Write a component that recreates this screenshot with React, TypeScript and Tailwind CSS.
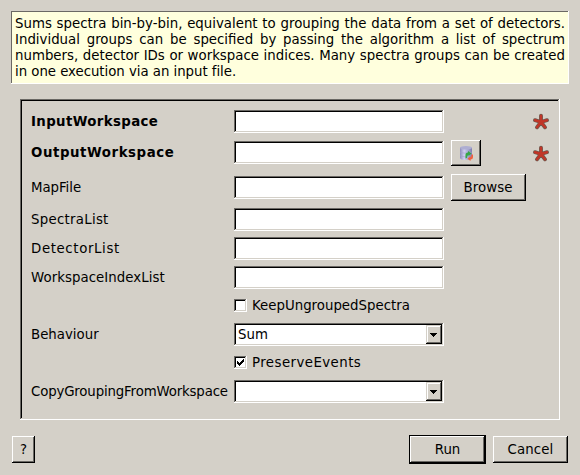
import type { ReactNode } from "react";

const sunken =
  "bg-white shadow-[inset_-1px_-1px_0_#fff,inset_1px_1px_0_#6a6864,inset_-2px_-2px_0_#d4d0c8,inset_2px_2px_0_#000]";
const raised =
  "flex items-center justify-center bg-[#d4d0c8] shadow-[inset_-1px_-1px_0_#000,inset_1px_1px_0_#fff,inset_-2px_-2px_0_#6a6864]";

function Row({ label, labelClass = "", className, children }: { label?: string; labelClass?: string; className: string; children: ReactNode }) {
  return (
    <div className={`flex items-center ${className}`}>
      <span className={`w-[203px] shrink-0 whitespace-nowrap ${labelClass}`}>{label}</span>
      {children}
    </div>
  );
}

function Field() {
  return <div className={`h-[23px] w-[210px] shrink-0 ${sunken}`} />;
}

function Combo({ value }: { value?: string }) {
  return (
    <div className={`flex h-[23px] w-[210px] shrink-0 justify-between p-0.5 ${sunken}`}>
      <span className="pl-0.5 leading-[19px]">{value}</span>
      <span className="flex h-[19px] w-4 items-center justify-center bg-[#d4d0c8] shadow-[inset_-1px_-1px_0_#000,inset_1px_1px_0_#d4d0c8,inset_-2px_-2px_0_#6a6864,inset_2px_2px_0_#fff]">
        <svg className="-ml-px" width="7" height="4" viewBox="0 0 7 4" shapeRendering="crispEdges">
          <path d="M0 0h7v1H6v1H5v1H4v1H3V3H2V2H1V1H0z" />
        </svg>
      </span>
    </div>
  );
}

function Check({ label, checked, labelClass = "" }: { label: string; checked?: boolean; labelClass?: string }) {
  return (
    <div className="flex items-center gap-[5px]">
      <span className={`flex size-[13px] items-center justify-center ${sunken}`}>
        {checked && (
          <svg width="7" height="7" viewBox="0 0 7 7" shapeRendering="crispEdges">
            <path d="M0 2h1v1h1v1h1V3h1V2h1V1h1V0h1v3H6v1H5v1H4v1H3v1H2V6H1V5H0z" />
          </svg>
        )}
      </span>
      <span className={`whitespace-nowrap ${labelClass}`}>{label}</span>
    </div>
  );
}

function Star({ className = "" }: { className?: string }) {
  return (
    <svg className={`mr-2.5 ml-auto ${className}`} width="17" height="17" viewBox="0 0 17 17">
      <g strokeLinecap="round" fill="none">
        <path d="M8 9V2.700M8 9L2 7.200M8 9L14 7.200M8 9L4 14.300M8 9L12 14.300" stroke="#6c5a50" strokeWidth="3.900" />
        <path d="M8 9V2.700M8 9L2 7.200M8 9L14 7.200M8 9L4 14.300M8 9L12 14.300" stroke="#c03628" strokeWidth="2.500" />
      </g>
    </svg>
  );
}

function DatabaseIcon() {
  return (
    <svg width="16" height="16" viewBox="0 0 16 16">
      <defs>
        <linearGradient id="cylinder">
          <stop stopColor="#8c8cba" />
          <stop offset=".35" stopColor="#d0d0f2" />
          <stop offset="1" stopColor="#7c7caf" />
        </linearGradient>
      </defs>
      <path d="M2 2.800v10C2 14.300 4.500 15 8 15s6-.8 6-2.200v-10z" fill="url(#cylinder)" />
      <ellipse cx="8" cy="2.800" rx="6" ry="1.800" fill="#aeaed2" />
      <path d="M2 7c2 1.500 10 1.500 12 0M2 10.500c2 1.500 7 1.500 9 1" fill="none" stroke="#a1a1ca" strokeWidth=".6" />
      <path d="M7.500 13.500V10q0-2.500 2.500-2.500V6L13.500 8.500 10.500 11V9.800Q9 10.500 9 13z" fill="#35a747" />
      <path d="M15 9.500v2.700q0 2.300-2.500 2.300V16L9.500 13.700l3-2.400v1.200q1-.5 1-3z" fill="#f25f3c" />
    </svg>
  );
}

const help = [
  "Sums spectra bin-by-bin, equivalent to grouping the data from a set of detectors.",
  "Individual groups can be specified by passing the algorithm a list of spectrum",
  "numbers, detector IDs or workspace indices. Many spectra groups can be created",
];

export default function App() {
  return (
    <main className="flex h-[475px] w-[580px] flex-col overflow-hidden bg-[#d4d0c8] pt-[11px] font-['DejaVu_Sans',sans-serif] text-[13.33px] leading-4 text-black">
      <section className="ml-[11px] h-[73px] w-[558px] bg-[#ffffdd] pt-[5px] pr-1 pl-1 shadow-[inset_-1px_-1px_0_#fff,inset_1px_1px_0_#6a6864]">
        {help.map((line) => (
          <p key={line} className="h-4 whitespace-nowrap [text-align-last:justify]">{line}</p>
        ))}
        <p className="tracking-[-0.04px]">in one execution via an input file.</p>
      </section>

      <section className="mt-[15px] ml-5 h-[321px] w-[540px] pt-[11px] pl-[11px] shadow-[inset_-1px_-1px_0_#fff,inset_1px_1px_0_#6a6864,inset_-2px_-2px_0_#d4d0c8,inset_2px_2px_0_#000]">
        <Row label="InputWorkspace" labelClass="font-bold tracking-[0.37px]" className="h-[23px]"><Field /><Star /></Row>
        <Row label="OutputWorkspace" labelClass="font-bold tracking-[0.57px]" className="mt-2 h-[23px]">
          <Field />
          <div className={`ml-[7px] h-[26px] w-[30px] ${raised}`}><DatabaseIcon /></div>
          <Star className="mt-0.5" />
        </Row>
        <Row label="MapFile" labelClass="tracking-[-0.05px]" className="mt-2.5 h-[27px]">
          <Field />
          <div className={`ml-[7px] h-[27px] w-[75px] pr-px tracking-[0.1px] ${raised}`}>Browse</div>
        </Row>
        <Row label="SpectraList" labelClass="tracking-[0.27px]" className="mt-[7px] h-[23px]"><Field /></Row>
        <Row label="DetectorList" labelClass="tracking-[0.62px]" className="mt-1.5 h-[23px]"><Field /></Row>
        <Row label="WorkspaceIndexList" labelClass="tracking-[0.05px]" className="mt-1.5 h-[23px]"><Field /></Row>
        <Row className="mt-2.5 h-[13px]"><Check label="KeepUngroupedSpectra" /></Row>
        <Row label="Behaviour" className="mt-[11px] h-[23px]"><Combo value="Sum" /></Row>
        <Row className="mt-2.5 h-[13px]"><Check label="PreserveEvents" labelClass="tracking-[0.44px]" checked /></Row>
        <Row label="CopyGroupingFromWorkspace" labelClass="tracking-[-0.16px]" className="mt-[11px] h-[23px]"><Combo /></Row>
      </section>

      <footer className="mt-[15px] flex h-[29px] items-center pr-3 pl-3">
        <div className={`h-[27px] w-[23px] ${raised}`}>?</div>
        <div className="ml-auto h-[29px] w-[77px] bg-black p-px">
          <div className={`h-[27px] w-[75px] ${raised}`}>Run</div>
        </div>
        <div className={`ml-[7px] h-[27px] w-[75px] tracking-[0.1px] ${raised}`}>Cancel</div>
      </footer>
    </main>
  );
}
